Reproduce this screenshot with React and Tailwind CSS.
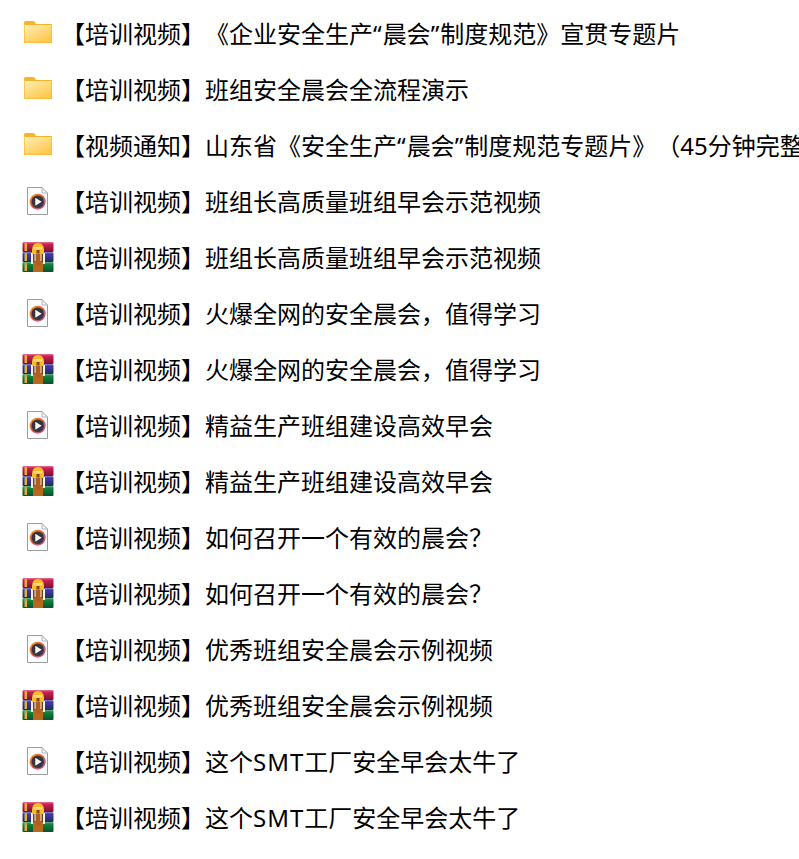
import React from "react";

function FolderIcon() {
  return (
    <svg width="32" height="32" viewBox="0 0 32 32">
      <defs>
        <linearGradient id="folderFill" x1="0" y1="0" x2="0.7" y2="1">
          <stop offset="0" stopColor="#ffeeb4" />
          <stop offset="1" stopColor="#fdc84c" />
        </linearGradient>
      </defs>
      <path d="M2 5.500C2 4.600 2.600 4 3.500 4h7.500c.8 0 1.200.3 1.700 1l1.300 2H2z" fill="#f6b522" />
      <rect x="2" y="7" width="28" height="19" rx="0.800" fill="#f3b32a" />
      <rect x="2.600" y="8" width="26.800" height="17.400" fill="url(#folderFill)" />
    </svg>
  );
}

function VideoIcon() {
  return (
    <svg width="32" height="32" viewBox="0 0 32 32">
      <defs>
        <linearGradient id="ringFill" x1="0" y1="0" x2="1" y2="1">
          <stop offset="0" stopColor="#f6a030" />
          <stop offset="0.5" stopColor="#dd5a3c" />
          <stop offset="1" stopColor="#9a60d0" />
        </linearGradient>
      </defs>
      <path d="M5.500 2.500h14.500l5.500 5.500v21.500h-20z" fill="#fcfcfc" stroke="#9c9c9c" strokeWidth="1" />
      <path d="M20 2.500v5.500h5.500z" fill="#efefef" stroke="#b8b8b8" strokeWidth="1" strokeLinejoin="round" />
      <circle cx="15.700" cy="16.700" r="8" fill="url(#ringFill)" />
      <circle cx="15.700" cy="16.700" r="6.300" fill="#37373b" />
      <path d="M13.300 12.700v8l6.300-4z" fill="#ffffff" />
    </svg>
  );
}

function RarIcon() {
  return (
    <svg width="32" height="32" viewBox="0 0 32 32">
      <defs>
        <linearGradient id="rarRed" x1="0" y1="0" x2="0" y2="1">
          <stop offset="0" stopColor="#e8789a" />
          <stop offset="0.2" stopColor="#c9224f" />
          <stop offset="1" stopColor="#7e0f32" />
        </linearGradient>
        <linearGradient id="rarBlue" x1="0" y1="0" x2="0" y2="1">
          <stop offset="0" stopColor="#8484d0" />
          <stop offset="0.2" stopColor="#3f3f9c" />
          <stop offset="1" stopColor="#26266e" />
        </linearGradient>
        <linearGradient id="rarGreen" x1="0" y1="0" x2="0" y2="1">
          <stop offset="0" stopColor="#5dbd7c" />
          <stop offset="0.2" stopColor="#14843e" />
          <stop offset="1" stopColor="#0a5228" />
        </linearGradient>
      </defs>
      <rect x="0.500" y="1" width="31" height="10" rx="1" fill="url(#rarRed)" />
      <rect x="0.500" y="11" width="31" height="10" rx="1" fill="url(#rarBlue)" />
      <rect x="0.500" y="21" width="31" height="10" rx="1" fill="url(#rarGreen)" />
      <rect x="2.500" y="2" width="2.500" height="8" fill="#e4ac35" />
      <rect x="2.500" y="12" width="2.500" height="8" fill="#e4ac35" />
      <rect x="2.500" y="22" width="2.500" height="8" fill="#e4ac35" />
      <rect x="9" y="12" width="14" height="11" fill="#f5f2ec" />
      <rect x="11" y="20" width="10" height="11" fill="#b9681e" />
      <rect x="13.500" y="11" width="5" height="14" fill="#b0601a" />
      <rect x="11" y="13" width="1.500" height="8" fill="#6a4422" />
      <rect x="19.500" y="13" width="1.500" height="8" fill="#6a4422" />
      <path d="M10 9.500c0-4.800 2-7.500 6-7.500s6 2.700 6 7.500v3.500h-12z" fill="#f7bb2a" />
      <path d="M11.500 6h9v2.500h-9z" fill="#fcd969" />
      <rect x="14.500" y="9" width="3" height="3.500" fill="#7a4310" />
    </svg>
  );
}

// quotes and latin run wider in the original font
function Wide({ children }) {
  return <span className="tracking-[1px]">{children}</span>;
}

const icons = { folder: FolderIcon, video: VideoIcon, rar: RarIcon };

const rows = [
  ["folder", <>【培训视频】《企业安全生产<Wide>“</Wide>晨会<Wide>”</Wide>制度规范》宣贯专题片</>],
  ["folder", "【培训视频】班组安全晨会全流程演示"],
  ["folder", <>【视频通知】山东省《安全生产<Wide>“</Wide>晨会<Wide>”</Wide>制度规范专题片》（45分钟完整版）</>],
  ["video", "【培训视频】班组长高质量班组早会示范视频"],
  ["rar", "【培训视频】班组长高质量班组早会示范视频"],
  ["video", "【培训视频】火爆全网的安全晨会，值得学习"],
  ["rar", "【培训视频】火爆全网的安全晨会，值得学习"],
  ["video", "【培训视频】精益生产班组建设高效早会"],
  ["rar", "【培训视频】精益生产班组建设高效早会"],
  ["video", "【培训视频】如何召开一个有效的晨会？"],
  ["rar", "【培训视频】如何召开一个有效的晨会？"],
  ["video", "【培训视频】优秀班组安全晨会示例视频"],
  ["rar", "【培训视频】优秀班组安全晨会示例视频"],
  ["video", <>【培训视频】这个<Wide>SMT</Wide>工厂安全早会太牛了</>],
  ["rar", <>【培训视频】这个<Wide>SMT</Wide>工厂安全早会太牛了</>],
];

export default function App() {
  return (
    <div className="h-[859px] overflow-hidden bg-white pt-[5px] pl-[22px] font-['Noto_Sans','Noto_Sans_CJK_SC',sans-serif] text-black [text-spacing-trim:space-all]">
      {rows.map(([type, label], i) => {
        const Icon = icons[type];
        return (
          <div key={i} className="flex h-[56px] items-center">
            <div className="w-[32px] shrink-0">
              <Icon />
            </div>
            <span className="ml-[7px] mt-[2px] whitespace-nowrap text-[24px] leading-[54px]">
              {label}
            </span>
          </div>
        );
      })}
    </div>
  );
}
